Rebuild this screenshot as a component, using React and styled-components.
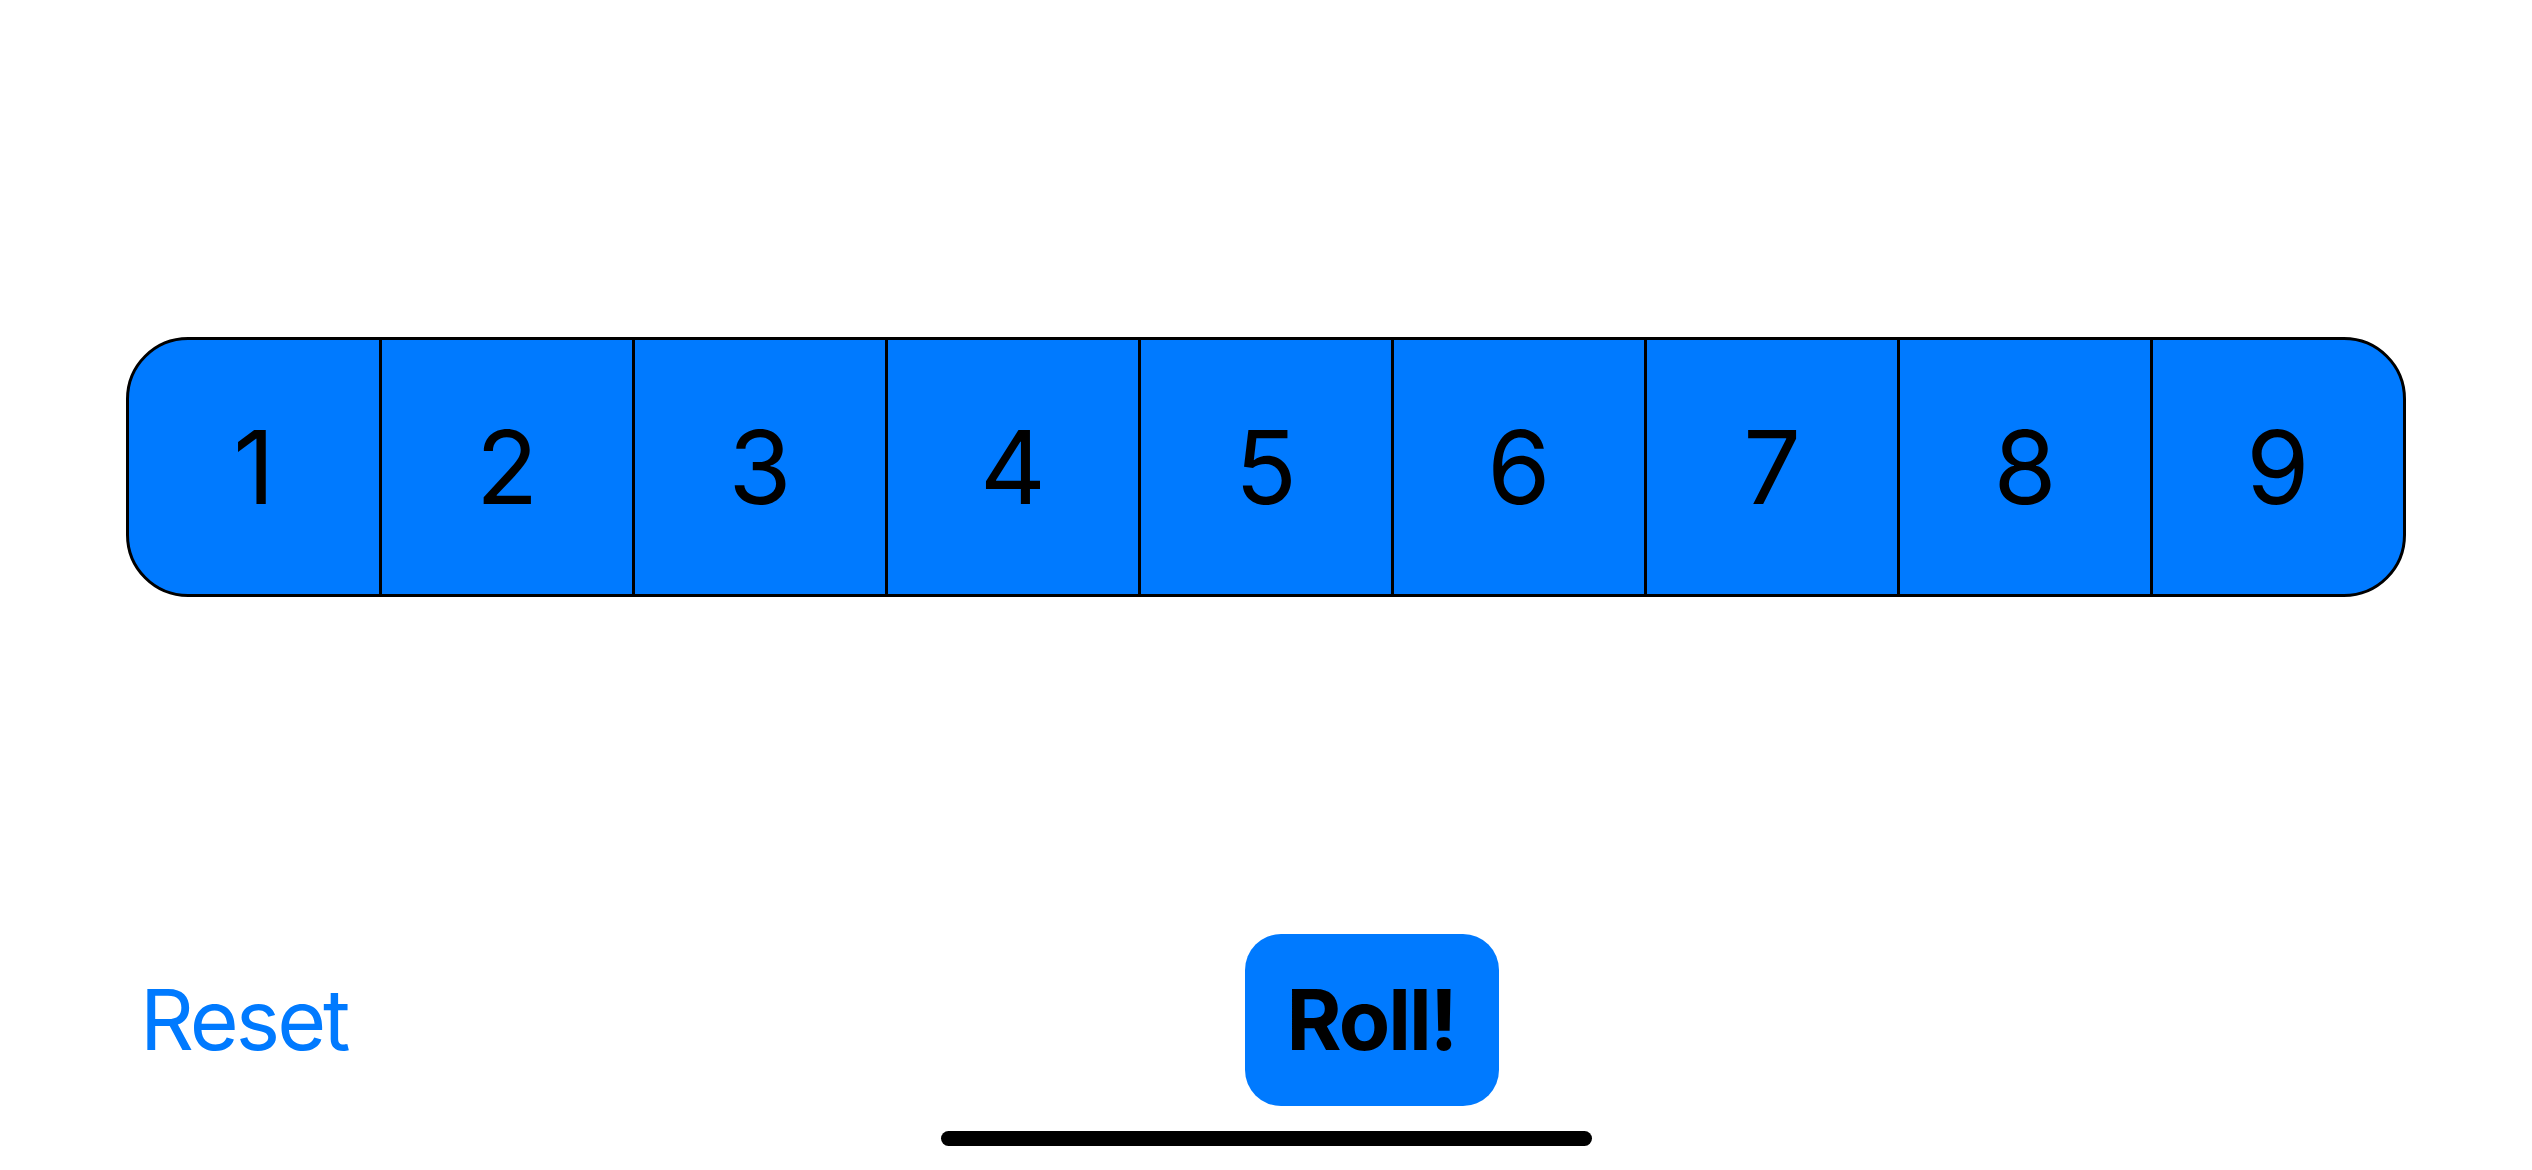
import React from "react";
import styled, { createGlobalStyle } from "styled-components";

const Global = createGlobalStyle`
  html, body { margin: 0; padding: 0; background: #ffffff; }
  body { font-family: Inter, "Noto Sans", "Liberation Sans", sans-serif; }
  * { box-sizing: border-box; }
`;

const Page = styled.div`
  width: 2532px;
  height: 1170px;
  display: flex;
  flex-direction: column;
  padding: 0 126px 24px;
  background: #ffffff;
`;

const Stage = styled.div`
  flex: 1;
  display: flex;
  align-items: center;
`;

const Track = styled.div`
  width: 100%;
  height: 260px;
  display: flex;
  border: 3px solid #000;
  border-radius: 62px;
  overflow: hidden;
  background: #007aff;
`;

const Cell = styled.div`
  flex: 1;
  display: flex;
  align-items: center;
  justify-content: center;
  border-left: ${(p) => (p.$first ? "none" : "3px solid #000")};
  font-size: 102px;
  font-weight: 400;
  color: #000;
  line-height: 1;
`;

const Controls = styled.div`
  height: 172px;
  display: flex;
  align-items: center;
  padding: 0 10px 0 14px;
`;

const LinkButton = styled.button`
  border: none;
  background: none;
  padding: 0;
  font-family: inherit;
  font-size: 84px;
  font-weight: 400;
  color: #007aff;
  line-height: 1;
  letter-spacing: -3px;
`;

const Spacer = styled.div`
  flex: 1;
`;

const RollButton = styled.button`
  height: 172px;
  padding: 0 43px 0 42px;
  border: none;
  border-radius: 36px;
  background: #007aff;
  color: #000;
  font-family: inherit;
  font-size: 84px;
  font-weight: 700;
  line-height: 1;
  letter-spacing: -2px;
`;

const HomeIndicator = styled.div`
  align-self: center;
  margin-top: 25px;
  width: 651px;
  height: 15px;
  border-radius: 8px;
  background: #000;
`;

export default function App() {
  const cells = [1, 2, 3, 4, 5, 6, 7, 8, 9];
  return (
    <>
      <Global />
      <Page>
        <Stage>
          <Track>
            {cells.map((n, i) => (
              <Cell key={n} $first={i === 0}>
                {n}
              </Cell>
            ))}
          </Track>
        </Stage>
        <Controls>
          <LinkButton>Reset</LinkButton>
          <Spacer />
          <RollButton>Roll!</RollButton>
          <Spacer />
        </Controls>
        <HomeIndicator />
      </Page>
    </>
  );
}
